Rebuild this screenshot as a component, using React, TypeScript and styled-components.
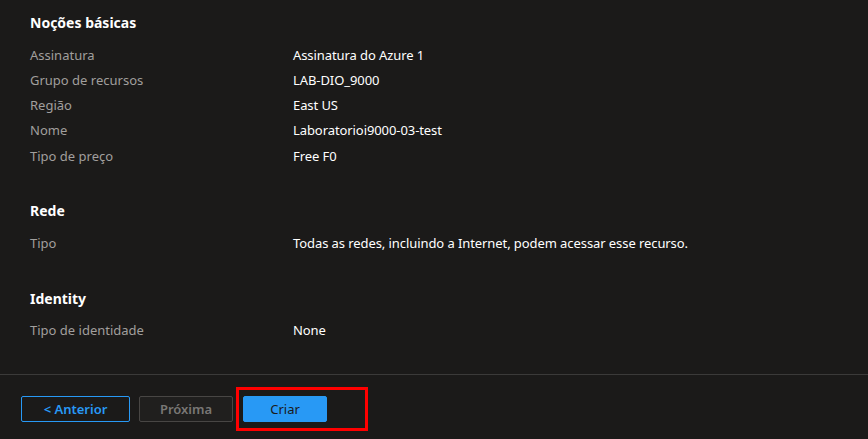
import React from "react";
import styled, { createGlobalStyle } from "styled-components";

const Global = createGlobalStyle`
  html, body { margin: 0; padding: 0; background: #1b1a19; }
  body { font-family: "Segoe UI", "Noto Sans", "Open Sans", sans-serif; }
  * { box-sizing: border-box; }
`;

const Page = styled.div`
  height: 100vh;
  display: flex;
  flex-direction: column;
  background: #1b1a19;
  color: #ffffff;
`;

const Content = styled.div`
  flex: 1;
  padding: 13px 30px 0 30px;
  display: flex;
  flex-direction: column;
  gap: 33px;
`;

const Section = styled.section`
  display: flex;
  flex-direction: column;
`;

const Heading = styled.h2`
  margin: 0 0 9px 0;
  height: 20px;
  line-height: 20px;
  font-size: 14px;
  font-weight: 700;
  color: #ffffff;
`;

const Row = styled.div`
  display: grid;
  grid-template-columns: 263px 1fr;
  height: 25.25px;
  align-items: center;
  font-size: 13px;
`;

const Label = styled.span`
  color: #a19f9d;
`;

const Value = styled.span`
  color: #ffffff;
  letter-spacing: -0.08px;
`;

const Footer = styled.footer`
  border-top: 1px solid #3b3a39;
  height: 65px;
  padding: 21px 21px 0 21px;
  display: flex;
  align-items: flex-start;
  gap: 9px;
`;

const BaseButton = styled.button<{ $w: number }>`
  height: 26px;
  width: ${(p) => p.$w}px;
  border-radius: 2px;
  font-family: inherit;
  font-size: 13px;
  font-weight: 600;
  padding: 0;
  cursor: pointer;
`;

const OutlineButton = styled(BaseButton)`
  border: 1px solid #2899f5;
  background: transparent;
  color: #2899f5;
`;

const DisabledButton = styled(BaseButton)`
  border: 1px solid #484644;
  background: #201f1e;
  color: #797775;
`;

const PrimaryButton = styled(BaseButton)`
  border: 1px solid #2899f5;
  background: #2899f5;
  color: #1b1a19;
  font-weight: 400;
`;

const Highlight = styled.div`
  position: relative;
  margin-left: 1px;
  &::after {
    content: "";
    position: absolute;
    top: -9px;
    left: -7px;
    right: -41px;
    bottom: -9px;
    border: 3px solid #ff0000;
    pointer-events: none;
  }
`;

const sections = [
  {
    title: "Noções básicas",
    rows: [
      ["Assinatura", "Assinatura do Azure 1"],
      ["Grupo de recursos", "LAB-DIO_9000"],
      ["Região", "East US"],
      ["Nome", "Laboratorioi9000-03-test"],
      ["Tipo de preço", "Free F0"],
    ],
  },
  {
    title: "Rede",
    rows: [["Tipo", "Todas as redes, incluindo a Internet, podem acessar esse recurso."]],
  },
  {
    title: "Identity",
    rows: [["Tipo de identidade", "None"]],
  },
];

export default function App() {
  return (
    <Page>
      <Global />
      <Content>
        {sections.map((s) => (
          <Section key={s.title}>
            <Heading>{s.title}</Heading>
            {s.rows.map(([l, v]) => (
              <Row key={l}>
                <Label>{l}</Label>
                <Value>{v}</Value>
              </Row>
            ))}
          </Section>
        ))}
      </Content>
      <Footer>
        <OutlineButton $w={109}>&lt; Anterior</OutlineButton>
        <DisabledButton $w={94}>Próxima</DisabledButton>
        <Highlight>
          <PrimaryButton $w={84}>Criar</PrimaryButton>
        </Highlight>
      </Footer>
    </Page>
  );
}
